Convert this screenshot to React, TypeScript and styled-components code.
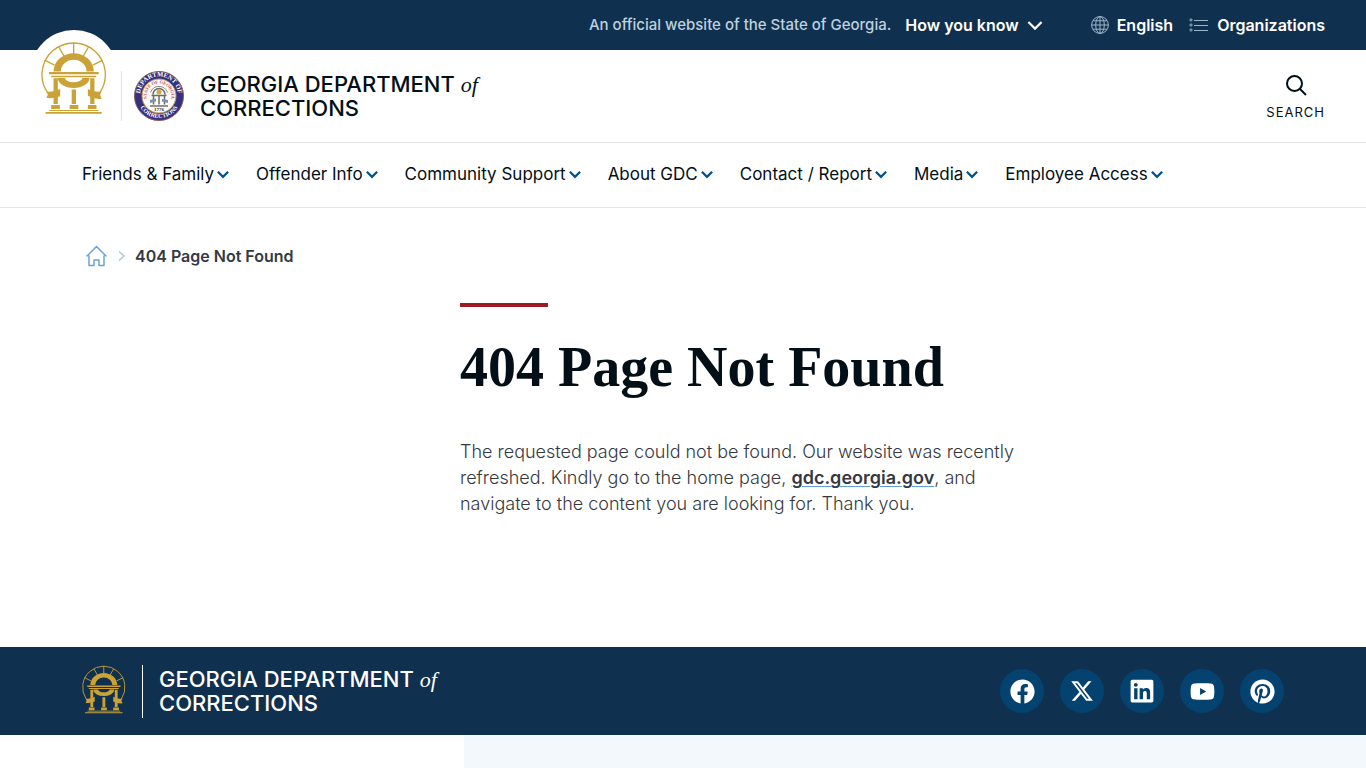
import React from "react";
import styled, { createGlobalStyle } from "styled-components";
import { FaFacebook, FaLinkedin, FaYoutube, FaPinterest } from "react-icons/fa";
import { FaXTwitter } from "react-icons/fa6";

const navy = "#10304f";
const ink = "#020f16";
const gold = "#c9a337";

const GlobalStyle = createGlobalStyle`
  *, *::before, *::after { box-sizing: border-box; }
  body {
    margin: 0;
    background: #fff;
    color: ${ink};
    font-family: Inter, "Liberation Sans", sans-serif;
  }
  a { color: inherit; text-decoration: none; }
  button { font: inherit; color: inherit; background: none; border: 0; padding: 0; cursor: pointer; }
  svg { display: block; flex: none; }
`;

const TopBar = styled.div`
  display: flex;
  align-items: center;
  justify-content: flex-end;
  height: 50px;
  padding: 0 41px;
  background: ${navy};
  color: #fff;
  font-size: 16px;
  line-height: 20px;
  font-weight: 600;
`;

const Official = styled.p`
  margin: 0 14px 0 0;
  color: #bfd0de;
  font-size: 15px;
  font-weight: 500;
`;

const TopButton = styled.button`
  display: flex;
  align-items: center;
  gap: 8px;
`;

const TopLink = styled.a<{ $gap: number }>`
  display: flex;
  align-items: center;
  gap: 8px;
  margin-left: ${(p) => p.$gap}px;
`;

const Masthead = styled.header`
  display: flex;
  align-items: center;
  height: 93px;
  padding: 0 41px 0 30px;
  border-bottom: 1px solid #e3e6e8;
`;

const StateLogo = styled.a`
  position: relative;
  display: flex;
  align-items: center;
  justify-content: center;
  width: 88px;
  height: 88px;
  margin-top: -44px;
  padding-top: 8px;
  border-radius: 50%;
  background: #fff;
`;

const Divider = styled.span<{ $height: number; $color: string }>`
  width: 1px;
  height: ${(p) => p.$height}px;
  background: ${(p) => p.$color};
`;

const AgencyLink = styled.a`
  display: flex;
  align-items: center;
`;

const HeaderAgency = styled(AgencyLink)`
  gap: 12px;
  margin-left: 3px;
`;

const FooterAgency = styled(AgencyLink)`
  gap: 16px;
  svg { align-self: flex-start; }
`;

const AgencyName = styled.span<{ $indent: number }>`
  margin-left: ${(p) => p.$indent}px;
  font-size: 22px;
  line-height: 24px;
  font-weight: 500;
  text-transform: uppercase;

  em {
    font-family: "Liberation Serif", serif;
    font-size: 22px;
    line-height: 20px;
    font-weight: 400;
    text-transform: none;
  }
`;

const SearchButton = styled.button`
  display: flex;
  flex-direction: column;
  align-items: center;
  gap: 8px;
  margin-left: auto;
  padding-top: 2px;
  font-size: 13px;
  line-height: 16px;
  letter-spacing: 1px;
`;

const Nav = styled.nav`
  padding: 0 82px;
  border-bottom: 1px solid #e3e6e8;
`;

const NavList = styled.ul`
  display: flex;
  gap: 27px;
  height: 64px;
  margin: 0;
  padding: 0;
  list-style: none;
`;

const NavButton = styled.button`
  display: flex;
  align-items: center;
  gap: 3px;
  height: 62px;
  font-size: 17px;
  white-space: nowrap;
  svg { color: #00528c; }
`;

const Breadcrumb = styled.nav`
  display: flex;
  align-items: center;
  gap: 9px;
  padding: 36px 86px 0;
  font-size: 16px;
  line-height: 24px;
  font-weight: 600;
  color: #35393f;
`;

const Article = styled.main`
  display: flex;
  flex-direction: column;
  align-items: flex-start;
  width: 560px;
  max-width: 100%;
  min-height: 379px;
  margin-left: calc(50% - 223px);
  padding-top: 35px;
`;

const Accent = styled.span`
  width: 88px;
  height: 4px;
  background: #9f1b22;
`;

const Title = styled.h1`
  margin: 28px 0 0;
  font-family: "Liberation Serif", serif;
  font-size: 56px;
  line-height: 64px;
  font-weight: 700;
`;

const Copy = styled.p`
  margin: 40px 0 0;
  font-size: 18px;
  line-height: 26px;
  font-weight: 300;
  color: #35393f;

  a {
    font-weight: 600;
    text-decoration: underline;
    text-decoration-color: #5f9fd8;
    text-decoration-thickness: 1px;
    text-underline-offset: 2px;
  }
`;

const FooterBar = styled.footer`
  display: flex;
  align-items: center;
  justify-content: space-between;
  height: 88px;
  padding: 0 82px;
  background: ${navy};
  color: #fff;
`;

const SocialList = styled.ul`
  display: flex;
  gap: 16px;
  margin: 0;
  padding: 0;
  list-style: none;
`;

const SocialLink = styled.a`
  display: flex;
  align-items: center;
  justify-content: center;
  width: 44px;
  height: 44px;
  border-radius: 50%;
  background: #04426f;
`;

const FooterPanels = styled.div`
  display: grid;
  grid-template-columns: 34% 1fr;
  height: 33px;
`;

const FooterPanel = styled.div`
  grid-column: 2;
  background: #f3f8fc;
`;

function Chevron({ width, height, stroke }: { width: number; height: number; stroke: number }) {
  return (
    <svg width={width} height={height} viewBox="0 0 14 10" fill="none" stroke="currentColor" strokeWidth={stroke} aria-hidden="true">
      <path d="M1 1.8 7 7.8 13 1.8" />
    </svg>
  );
}

function Arch({ width, height }: { width: number; height: number }) {
  return (
    <svg width={width} height={height} viewBox="19 39 200 220" fill={gold} role="img" aria-label="Georgia.gov">
      <g fill="none" stroke={gold} strokeWidth="4">
        <path d="M38 192A96 96 0 1 1 198 192" />
        <path d="M118 42V78M73 55 90 84M163 55 146 84M30 95 60 110M206 95 176 110" />
      </g>
      <path d="M57 129A61 55 0 0 1 179 129H157A39 35 0 0 0 79 129Z" />
      <path d="M70 149H92A26 13 0 0 0 144 149H166A48 30 0 0 1 70 149Z" />
      <path d="M43 131H194V138H43ZM50 142H186V147H50Z" />
      <path d="M57 150H70V228H57ZM112 184H125V228H112ZM168 150H181V228H168Z" />
      <path d="M50 231H76V243H50ZM106 231H132V243H106ZM161 231H187V243H161Z" />
      <path d="M44 246H193V249H44ZM33 252H203V257H33Z" />
      <path d="M35 190Q56 194 77 182V204Q56 213 35 209L40 200ZM161 182Q180 194 203 190L198 200 203 212Q181 215 161 203Z" />
    </svg>
  );
}

function Seal() {
  return (
    <svg width="50" height="50" viewBox="0 0 100 100" role="img" aria-label="Georgia Department of Corrections seal">
      <defs>
        <path id="seal-top" d="M14 61A38 38 0 1 1 86 61" />
        <path id="seal-bottom" d="M6 50A44 44 0 0 0 94 50" />
        <path id="seal-inner" d="M30 65A25 25 0 1 1 70 65" />
      </defs>
      <circle cx="50" cy="50" r="49" fill="#35307f" stroke="#8b5a50" strokeWidth="2" />
      <circle cx="50" cy="50" r="34" fill="#fdfaf5" stroke="#b79c50" strokeWidth="2" />
      <g fontFamily="Liberation Serif, serif" fontWeight="700" textAnchor="middle">
        <text fontSize="13" fill="#fff">
          <textPath href="#seal-top" startOffset="50%">DEPARTMENT OF</textPath>
        </text>
        <text fontSize="12" fill="#fff">
          <textPath href="#seal-bottom" startOffset="50%">CORRECTIONS</textPath>
        </text>
        <text fontSize="9" fill="#c8434e">
          <textPath href="#seal-inner" startOffset="50%">STATE OF GEORGIA</textPath>
        </text>
        <text x="50" y="80" fontSize="10" fill="#333">1776</text>
      </g>
      <g fill="none" stroke="#6b6d70" strokeWidth="3">
        <path d="M38 47A12 12 0 0 1 62 47M35 49H65M39 49V67M50 50V67M61 49V67M32 70H68" />
        <path d="M33 43A18 18 0 0 1 67 43" stroke="#8c8e91" strokeWidth="2" />
      </g>
      <circle cx="50" cy="42" r="5" fill="#cfa94e" />
      <path d="M32 58 44 55V61L32 64ZM56 56 68 58V64L56 61Z" fill="#7892b0" />
    </svg>
  );
}

function Globe() {
  return (
    <svg width="18" height="18" viewBox="0 0 18 18" fill="none" stroke="#9eb4c8" aria-hidden="true">
      <circle cx="9" cy="9" r="8.4" />
      <ellipse cx="9" cy="9" rx="4.3" ry="8.4" />
      <path d="M9 .6V17.4M.6 9H17.4M2 4.8H16M2 13.2H16" />
    </svg>
  );
}

function ListIcon() {
  return (
    <svg width="20" height="14" viewBox="0 0 20 14" fill="none" stroke="#9eb4c8" aria-hidden="true">
      <circle cx="2" cy="2" r="1.1" />
      <circle cx="2" cy="7" r="1.1" />
      <circle cx="2" cy="12" r="1.1" />
      <path d="M5 2.5H19M5 7.5H19M5 12.5H19" />
    </svg>
  );
}

const menu = ["Friends & Family", "Offender Info", "Community Support", "About GDC", "Contact / Report", "Media", "Employee Access"];

const social = [
  { name: "Facebook", Icon: FaFacebook, size: 25 },
  { name: "X", Icon: FaXTwitter, size: 24 },
  { name: "LinkedIn", Icon: FaLinkedin, size: 26 },
  { name: "YouTube", Icon: FaYoutube, size: 25 },
  { name: "Pinterest", Icon: FaPinterest, size: 25 },
];

function Name({ indent = 0 }: { indent?: number }) {
  return (
    <AgencyName $indent={indent}>
      Georgia Department <em>of</em>
      <br />
      Corrections
    </AgencyName>
  );
}

export default function App() {
  return (
    <>
      <GlobalStyle />
      <TopBar>
        <Official>An official website of the State of Georgia.</Official>
        <TopButton type="button">
          How you know
          <Chevron width={16} height={11} stroke={2} />
        </TopButton>
        <TopLink href="#language" $gap={48}>
          <Globe />
          English
        </TopLink>
        <TopLink href="#organizations" $gap={16}>
          <ListIcon />
          Organizations
        </TopLink>
      </TopBar>
      <Masthead>
        <StateLogo href="#georgia">
          <Arch width={66} height={74} />
        </StateLogo>
        <HeaderAgency href="#home">
          <Divider $height={50} $color="#dfe3e6" />
          <Seal />
          <Name indent={4} />
        </HeaderAgency>
        <SearchButton type="button">
          <svg width="22" height="22" viewBox="0 0 22 22" fill="none" stroke="currentColor" strokeWidth="2" aria-hidden="true">
            <circle cx="9.5" cy="9.5" r="7.5" />
            <path d="M15 15 21 21" />
          </svg>
          SEARCH
        </SearchButton>
      </Masthead>
      <Nav aria-label="Main">
        <NavList>
          {menu.map((label) => (
            <li key={label}>
              <NavButton type="button">
                {label}
                <Chevron width={12} height={9} stroke={2.6} />
              </NavButton>
            </li>
          ))}
        </NavList>
      </Nav>
      <Breadcrumb aria-label="Breadcrumb">
        <a href="#home" aria-label="Home">
          <svg width="21" height="22" viewBox="0 0 21 22" fill="none" stroke="#69a3d6" strokeWidth="1.5" strokeLinejoin="round" strokeLinecap="round" aria-hidden="true">
            <path d="M1 11 10.5 1.5 20 11M3 11V20.5H8V15H13V20.5H18V11" />
          </svg>
        </a>
        <svg width="10" height="10" viewBox="0 0 10 10" fill="none" stroke="#a9c5d8" strokeWidth="1.3" aria-hidden="true">
          <path d="M3 .5 8 5 3 9.5" />
        </svg>
        <span aria-current="page">404 Page Not Found</span>
      </Breadcrumb>
      <Article>
        <Accent />
        <Title>404 Page Not Found</Title>
        <Copy>
          The requested page could not be found. Our website was recently refreshed. Kindly go to the home page,{" "}
          <a href="#home">gdc.georgia.gov</a>, and navigate to the content you are looking for. Thank you.
        </Copy>
      </Article>
      <FooterBar>
        <FooterAgency href="#home">
          <Arch width={44} height={49} />
          <Divider $height={53} $color="#fff" />
          <Name />
        </FooterAgency>
        <SocialList>
          {social.map(({ name, Icon, size }) => (
            <li key={name}>
              <SocialLink href={"#" + name.toLowerCase()} aria-label={name}>
                <Icon size={size} />
              </SocialLink>
            </li>
          ))}
        </SocialList>
      </FooterBar>
      <FooterPanels>
        <FooterPanel />
      </FooterPanels>
    </>
  );
}
